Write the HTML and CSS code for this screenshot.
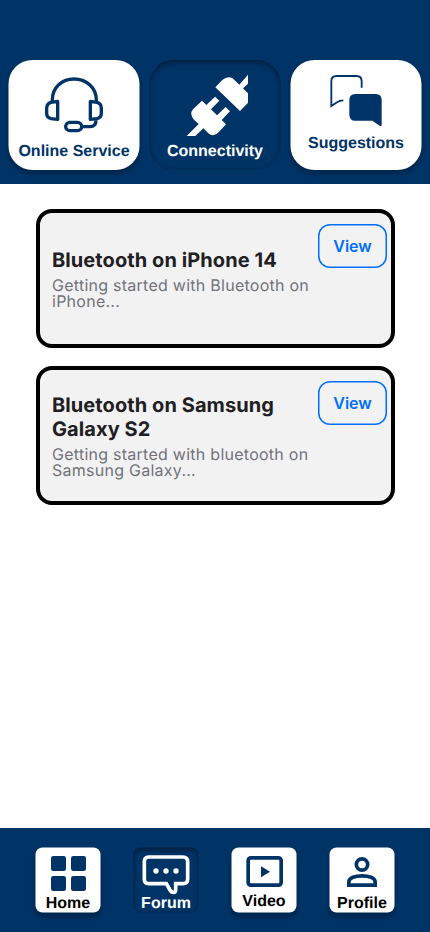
FILE: index.html
```html
<!DOCTYPE html>
<html lang="en">
<head>
<meta charset="utf-8">
<meta name="viewport" content="width=device-width, initial-scale=1">
<title>Forum – Connectivity</title>
<link rel="stylesheet" href="styles.css">
</head>
<body>
<div class="app">
  <header class="header">
    <a class="tab">
      <svg class="tab-icon" viewBox="25.5 30 393 234" fill="none" stroke="#003366" stroke-width="10" stroke-linejoin="round">
        <path d="M157 154V150C157 112 186 87 222 87S289 112 289 150V154"/>
        <path d="M173 154L153 157Q140 161 140 174V190Q140 203 153 206L173 208Z"/>
        <path d="M271 154L291 157Q304 161 304 174V190Q304 203 291 206L271 208Z"/>
        <rect x="197" y="217" width="48" height="25" rx="12.500"/>
        <path d="M247 230H270Q288 230 288 211"/>
      </svg>
      <span class="tab-label">Online Service</span>
    </a>
    <a class="tab active">
      <svg class="tab-icon" viewBox="19.5 30 393 234" fill="#fff">
        <path d="M217 112L238 90Q252 77 268 84L289 104L315 74V101L300 115L315 130V158L291 183Z"/>
        <path d="M131 258L167 222L153 209Q138 192 150 178L177 152L190 165L216 140L229 152L204 178L222 196L248 171L261 184L236 210L249 223L228 246Q212 263 196 250L181 235L157 258Z"/>
      </svg>
      <span class="tab-label">Connectivity</span>
    </a>
    <a class="tab">
      <svg class="tab-icon" viewBox="16.5 30 393 234" fill="none">
        <path d="M230 113V94Q230 78 214 78H155Q139 78 139 94V168L156 157Q163 151 175 151" stroke="#003366" stroke-width="5.500"/>
        <path d="M211 132H272Q290 132 290 150V224Q290 230 284 227L262 212H211Q193 212 193 194V150Q193 132 211 132Z" fill="#003366"/>
      </svg>
      <span class="tab-label raised">Suggestions</span>
    </a>
  </header>

  <main class="list">
    <article class="card">
      <div class="card-text">
        <h2 class="card-title">Bluetooth on iPhone 14</h2>
        <p class="card-desc">Getting started with Bluetooth on iPhone...</p>
      </div>
      <button class="view">View</button>
    </article>
    <article class="card">
      <div class="card-text">
        <h2 class="card-title">Bluetooth on Samsung Galaxy S2</h2>
        <p class="card-desc">Getting started with bluetooth on Samsung Galaxy...</p>
      </div>
      <button class="view">View</button>
    </article>
  </main>

  <nav class="nav">
    <a class="nav-item">
      <svg class="nav-icon" viewBox="46.5 76.5 195 138" fill="#003366">
        <rect x="93" y="102" width="45" height="45" rx="7"/>
        <rect x="153" y="102" width="45" height="45" rx="7"/>
        <rect x="93" y="162" width="45" height="45" rx="7"/>
        <rect x="153" y="162" width="45" height="45" rx="7"/>
      </svg>
      <span class="nav-label">Home</span>
    </a>
    <a class="nav-item active">
      <svg class="nav-icon" viewBox="40.500 76.5 195 138" fill="none">
        <path d="M86 105H189Q203 105 203 119V171Q203 185 189 185H167V203Q167 211 160 211Q154 211 150 204L139 185H86Q73 185 73 171V119Q73 105 86 105Z" stroke="#fff" stroke-width="11"/>
        <g fill="#fff"><circle cx="108" cy="147" r="8"/><circle cx="138" cy="147" r="8"/><circle cx="168" cy="147" r="8"/></g>
      </svg>
      <span class="nav-label">Forum</span>
    </a>
    <a class="nav-item">
      <svg class="nav-icon" viewBox="34.5 76.5 195 138" fill="none">
        <rect x="84.500" y="107.500" width="99" height="82" rx="8" stroke="#003366" stroke-width="11"/>
        <path d="M123 133V166L150 149.500Z" fill="#003366"/>
      </svg>
      <span class="nav-label raised">Video</span>
    </a>
    <a class="nav-item">
      <svg class="nav-icon" viewBox="28.5 76.5 195 138" fill="none" stroke="#003366" stroke-width="11">
        <circle cx="126" cy="127.500" r="17"/>
        <path d="M86.500 189.500V180C86.500 167 106 161.500 126 161.500S165.500 167 165.500 180V189.500Z"/>
      </svg>
      <span class="nav-label">Profile</span>
    </a>
  </nav>
</div>
</body>
</html>
```

FILE: styles.css
```css
* { box-sizing: border-box; }

body {
  margin: 0;
  background: #fff;
  font-family: Inter, "Liberation Sans", sans-serif;
  text-rendering: geometricPrecision;
}

.app {
  display: flex;
  flex-direction: column;
  height: 932px;
  overflow: hidden;
}

.header {
  display: flex;
  justify-content: center;
  gap: 10px;
  height: 184px;
  padding: 60px 1px 0 0;
  background: #003366;
}

.tab {
  display: flex;
  flex-direction: column;
  align-items: center;
  width: 131px;
  height: 110px;
  border-radius: 24px;
  background: #fff;
  color: #003366;
  box-shadow: 0 4px 4px rgba(0, 0, 0, 0.25);
  transform: translateX(0.5px);
}

.tab.active,
.nav-item.active {
  background: #003366;
  color: #fff;
  box-shadow: inset 0 4px 4px rgba(0, 0, 0, 0.25), inset 0 0 4px rgba(0, 0, 0, 0.25);
}

.tab-icon {
  display: block;
  flex: none;
  width: 131px;
  height: 78px;
}

.tab-label {
  margin-top: 5px;
  font: bold 16px/18px "Liberation Sans", Arial, sans-serif;
  white-space: nowrap;
}

.tab-label.raised { margin-top: -3px; }

.list {
  display: flex;
  flex: 1;
  flex-direction: column;
  gap: 18px;
  padding: 25px 35px 0 36px;
}

.card {
  display: flex;
  height: 139px;
  padding: 11px 4px 0 12px;
  border: 4px solid #000;
  border-radius: 16px;
  background: #f2f2f2;
}

.card-text {
  display: flex;
  flex: 1;
  flex-direction: column;
  justify-content: center;
  gap: 5px;
  height: 108px;
}

.card-title {
  margin: 0;
  color: #1f2024;
  font-size: 20px;
  font-weight: 700;
  line-height: 24px;
  letter-spacing: 0.08px;
}

.card-desc {
  margin: 0;
  color: #71727a;
  font-size: 16px;
  line-height: 16px;
  letter-spacing: 0.26px;
}

.view {
  width: 69px;
  height: 44px;
  padding: 0 0 1px;
  border: none;
  border-radius: 12px;
  background: transparent;
  box-shadow: inset 0 0 0 1.5px #006ffd;
  color: #006ffd;
  font: 600 16px/20px Inter, sans-serif;
}

.nav {
  display: flex;
  justify-content: center;
  gap: 33px;
  height: 104px;
  padding: 20px 1px 0 0;
  background: #003366;
}

.nav-item {
  display: flex;
  flex-direction: column;
  align-items: center;
  width: 65px;
  height: 65px;
  border-radius: 7px;
  background: #fff;
  color: #000;
  box-shadow: 0 4px 4px rgba(0, 0, 0, 0.25);
  transform: translate(0.5px, -0.5px);
}

.nav-icon {
  display: block;
  flex: none;
  width: 65px;
  height: 46px;
  overflow: visible;
}

.nav-label {
  margin-top: 1px;
  font: bold 16px/18px "Liberation Sans", Arial, sans-serif;
}

.nav-label.raised { margin-top: -1px; }
```
